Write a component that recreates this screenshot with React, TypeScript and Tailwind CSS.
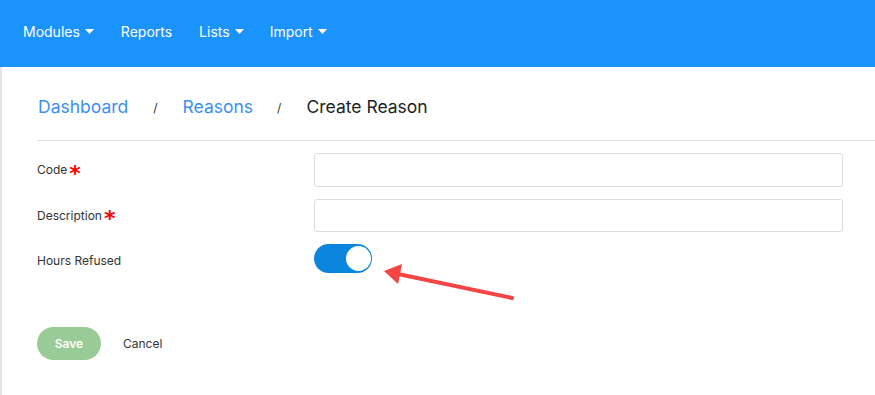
import React from "react";

const Caret = () => (
  <svg width="9" height="5" viewBox="0 0 9 5" className="ml-[5px] mt-[1px]">
    <path d="M0 0h9L4.5 5z" fill="white" />
  </svg>
);

const Star = () => (
  <span className="text-[#f00] text-[22px] font-bold leading-none ml-[2px] mt-[7px]" style={{ fontFamily: "'DejaVu Sans', sans-serif" }}>*</span>
);

export default function App() {
  return (
    <div className="w-[875px] h-[395px] bg-white overflow-hidden relative" style={{ fontFamily: "Inter, 'Noto Sans', sans-serif" }}>
      <nav className="h-[67px] bg-[#1b93fc] flex items-center pl-[23px] pb-[5px] text-white text-[14px]">
        <div className="flex items-center">Modules<Caret /></div>
        <div className="ml-[27px]">Reports</div>
        <div className="ml-[27px] flex items-center">Lists<Caret /></div>
        <div className="ml-[26px] flex items-center">Import<Caret /></div>
      </nav>
      <div className="border-l-2 border-[#e3e3e3] h-[328px] pl-[35px]">
        <div className="h-[73px] flex items-center pt-[8px] text-[17.5px]">
          <span className="text-[#3d8ff0] ml-[1px]">Dashboard</span>
          <span className="text-[#333] text-[12px] ml-[25px]">/</span>
          <span className="text-[#3d8ff0] ml-[25px]">Reasons</span>
          <span className="text-[#333] text-[12px] ml-[24px]">/</span>
          <span className="text-[#222] ml-[25px]">Create Reason</span>
        </div>
        <div className="border-t border-[#dee2e6] ml-[0px]" />
        <div className="text-[12px] text-[#333]">
          <div className="flex items-center mt-[12px]">
            <div className="w-[277px] flex items-center">Code<Star /></div>
            <div className="w-[529px] h-[34px] border border-[#dcdcdc] rounded-[3px]" />
          </div>
          <div className="flex items-center mt-[12px]">
            <div className="w-[277px] flex items-center">Description<Star /></div>
            <div className="w-[529px] h-[33px] border border-[#dcdcdc] rounded-[3px]" />
          </div>
          <div className="flex items-center mt-[12px]">
            <div className="w-[277px] pt-[5px]">Hours Refused</div>
            <div className="w-[58px] h-[29px] rounded-full bg-[#0b86de] relative">
              <div className="absolute right-[1px] top-[2px] w-[25px] h-[25px] rounded-full bg-white" />
            </div>
          </div>
          <div className="flex items-center mt-[54px]">
            <button className="w-[64px] h-[33px] rounded-full bg-[#98cb95] text-white font-semibold text-[12px]">Save</button>
            <span className="ml-[22px]">Cancel</span>
          </div>
        </div>
      </div>
      <svg className="absolute left-0 top-0" width="875" height="395" style={{ pointerEvents: "none" }}>
        <line x1="512" y1="298" x2="398" y2="274" stroke="#f44545" strokeWidth="4" strokeLinecap="round" />
        <polygon points="384,271 402,264 398,284" fill="#f44545" />
      </svg>
    </div>
  );
}
